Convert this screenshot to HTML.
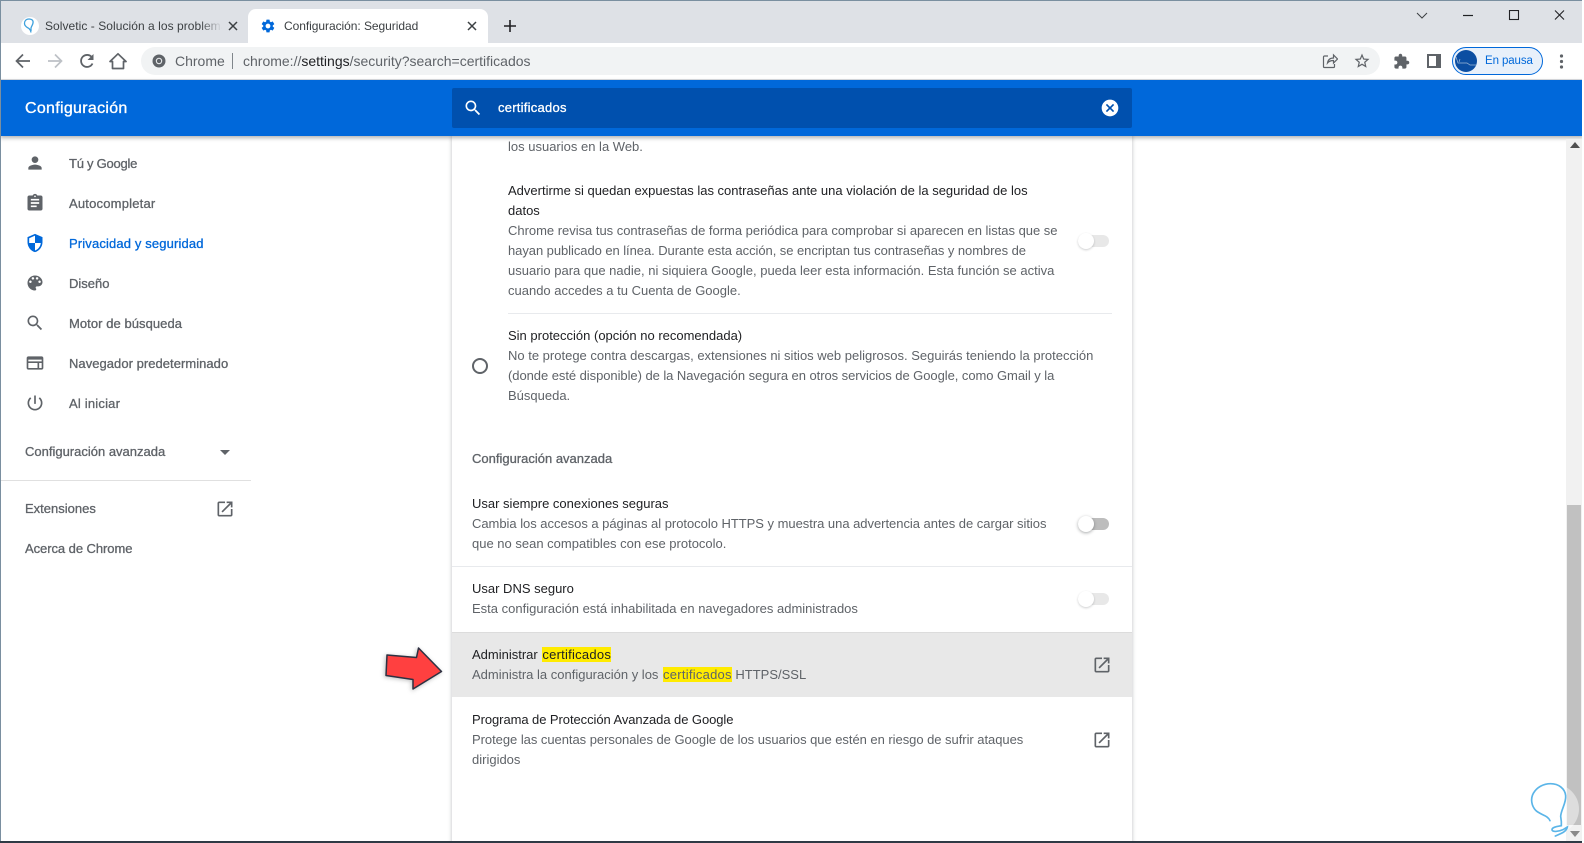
<!DOCTYPE html>
<html lang="es"><head><meta charset="utf-8"><title>Configuración: Seguridad</title>
<style>
html,body{margin:0;padding:0;width:1584px;height:843px;overflow:hidden;background:#fff}
body{position:relative;font-family:"Liberation Sans",sans-serif;color:#202124}
div,svg,span.a{position:absolute}
.t{white-space:nowrap;font-size:13px;line-height:20px;height:20px}
.k{color:#202124}.g{color:#5f6368}
.m{color:#5f6368;-webkit-text-stroke:.3px #5f6368}
mark{background:#ffeb00;color:inherit;letter-spacing:.25px}
svg{display:block}
</style></head><body>
<!-- tab strip -->
<div style="left:0;top:0;width:1584px;height:43px;background:#dee1e6"></div>
<div style="left:0;top:0;width:1584px;height:1px;background:#7a8fa0"></div>
<div style="left:248px;top:9px;width:240px;height:34px;background:#fff;border-radius:8px 8px 0 0"></div>
<svg style="left:20px;top:16px" width="20" height="20" viewBox="0 0 20 20"><circle cx="10" cy="10" r="9" fill="#fff"/><path d="M9 3c-3 0-4.500 2-4.500 4.500 0 3 3 4 4.500 5l1.500 2 .5 2M9 3c3 0 4.500 1.500 4 4-.3 2-1.500 3-2 5v3" fill="none" stroke="#3fa1dd" stroke-width="1.300"/></svg>
<div class="t" style="left:45px;top:16px;font-size:12px;color:#3c4043;width:177px;overflow:hidden;letter-spacing:.05px">Solvetic - Solución a los problemas</div>
<div style="left:200px;top:16px;width:22px;height:20px;background:linear-gradient(90deg,rgba(222,225,230,0),#dee1e6)"></div>
<svg style="left:227px;top:20px" width="12" height="12" viewBox="0 0 12 12"><path d="M2 2l8 8M10 2l-8 8" stroke="#3c4043" stroke-width="1.500"/></svg>
<svg style="left:260px;top:18px" width="16" height="16" viewBox="0 0 24 24"><path fill="#0068da" d="M19.140 12.940c.04-.3.06-.61.06-.94 0-.32-.02-.64-.07-.94l2.030-1.580c.18-.14.23-.41.12-.61l-1.920-3.320c-.12-.22-.37-.29-.59-.22l-2.390.96c-.5-.38-1.030-.7-1.620-.94l-.36-2.540c-.04-.24-.24-.41-.48-.41h-3.840c-.24 0-.43.17-.47.41l-.36 2.540c-.59.24-1.130.57-1.620.94l-2.390-.96c-.22-.08-.47 0-.59.22L2.740 8.870c-.12.21-.08.47.12.61l2.030 1.580c-.05.3-.09.63-.09.94s.02.64.07.94l-2.030 1.580c-.18.14-.23.41-.12.61l1.920 3.320c.12.22.37.29.59.22l2.390-.96c.5.38 1.030.7 1.620.94l.36 2.540c.05.24.24.41.48.41h3.840c.24 0 .44-.17.47-.41l.36-2.540c.59-.24 1.130-.56 1.620-.94l2.390.96c.22.08.47 0 .59-.22l1.920-3.320c.12-.22.07-.47-.12-.61l-2.010-1.580zM12 15.600c-1.980 0-3.600-1.620-3.600-3.600s1.620-3.600 3.600-3.600 3.600 1.620 3.600 3.600-1.620 3.600-3.600 3.600z"/></svg>
<div class="t" style="left:284px;top:16px;font-size:12px;color:#3c4043;letter-spacing:-.05px">Configuración: Seguridad</div>
<svg style="left:466px;top:20px" width="12" height="12" viewBox="0 0 12 12"><path d="M2 2l8 8M10 2l-8 8" stroke="#3c4043" stroke-width="1.500"/></svg>
<svg style="left:504px;top:20px" width="12" height="12" viewBox="0 0 12 12"><path d="M6 0v12M0 6h12" stroke="#202124" stroke-width="1.600"/></svg>
<!-- window controls -->
<svg style="left:1415px;top:10px" width="160" height="12" viewBox="0 0 160 12"><path d="M2 3l5 5 5-5" fill="none" stroke="#3c4043"/><path d="M48 5.500h10" stroke="#202124" stroke-width="1.200"/><rect x="94.500" y=".5" width="9" height="9" fill="none" stroke="#202124" stroke-width="1.100"/><path d="M140 .5l9 9M149 .5l-9 9" stroke="#202124" stroke-width="1.100"/></svg>
<!-- toolbar -->
<div style="left:0;top:43px;width:1584px;height:37px;background:#fff"></div>
<div style="left:0;top:79px;width:1584px;height:1px;background:#dadce0"></div>
<svg style="left:15px;top:53px" width="16" height="16" viewBox="0 0 16 16"><path d="M15 8H2M8 1.500L1.500 8 8 14.500" fill="none" stroke="#5f6368" stroke-width="1.700"/></svg>
<svg style="left:47px;top:53px" width="16" height="16" viewBox="0 0 16 16"><path d="M1 8h13M8 1.500L14.500 8 8 14.500" fill="none" stroke="#bdc1c6" stroke-width="1.700"/></svg>
<svg style="left:79px;top:53px" width="16" height="16" viewBox="0 0 16 16"><path d="M13.500 10.500A6 6 0 1 1 13 4.500" fill="none" stroke="#5f6368" stroke-width="1.800"/><path d="M14.500 1v6h-6z" fill="#5f6368"/></svg>
<svg style="left:109px;top:52px" width="18" height="18" viewBox="0 0 18 18"><path d="M1 9.500L9 1.800l8 7.700h-2.500V16.500h-11V9.500z" fill="none" stroke="#5f6368" stroke-width="1.700" stroke-linejoin="round"/></svg>
<div style="left:141px;top:47px;width:1239px;height:28px;border-radius:14px;background:#f1f3f4"></div>
<svg style="left:152px;top:54px" width="14" height="14" viewBox="0 0 14 14"><circle cx="7" cy="7" r="6.500" fill="#5f6368"/><circle cx="7" cy="7" r="3.200" fill="#f1f3f4"/><circle cx="7" cy="7" r="2.200" fill="#5f6368"/></svg>
<div class="t" style="left:175px;top:51px;font-size:14px;color:#5f6368">Chrome</div>
<div style="left:232px;top:53px;width:1px;height:16px;background:#80868b"></div>
<div class="t" style="left:243px;top:51px;font-size:14px;color:#5f6368">chrome://<span style="color:#202124">settings</span>/security?search=certificados</div>
<svg style="left:1322px;top:53px" width="16" height="16" viewBox="0 0 16 16"><path d="M6 3H2.500A1 1 0 0 0 1.500 4v9.500a1 1 0 0 0 1 1h9a1 1 0 0 0 1-1V11M5.500 10c.5-3 2.500-5 6-5V2l4 4-4 4V7.500c-2.500 0-4.500.7-6 2.500z" fill="none" stroke="#5f6368" stroke-width="1.200"/></svg>
<svg style="left:1353px;top:52px" width="18" height="18" viewBox="0 0 24 24"><path fill="#5f6368" d="M22 9.240l-7.190-.62L12 2 9.190 8.630 2 9.240l5.460 4.730L5.820 21 12 17.270 18.180 21l-1.630-7.030L22 9.240zM12 15.400l-3.760 2.270 1-4.280-3.320-2.880 4.380-.38L12 6.100l1.710 4.040 4.380.38-3.320 2.880 1 4.280L12 15.400z"/></svg>
<svg style="left:1393px;top:53px" width="17" height="17" viewBox="0 0 24 24"><path fill="#5f6368" d="M20.500 11H19V7c0-1.100-.9-2-2-2h-4V3.500C13 2.120 11.880 1 10.500 1S8 2.120 8 3.500V5H4c-1.100 0-1.990.9-1.990 2v3.800H3.500c1.490 0 2.700 1.210 2.700 2.700s-1.210 2.700-2.700 2.700H2V20c0 1.100.9 2 2 2h3.800v-1.500c0-1.490 1.210-2.700 2.700-2.700 1.490 0 2.700 1.210 2.700 2.700V22H17c1.100 0 2-.9 2-2v-4h1.500c1.380 0 2.500-1.120 2.500-2.500S21.880 11 20.500 11z"/></svg>
<svg style="left:1427px;top:54px" width="14" height="14" viewBox="0 0 14 14"><rect x="0" y="0" width="14" height="14" fill="#5f6368"/><rect x="2" y="2" width="7" height="10" fill="#fff"/></svg>
<div style="left:1452px;top:47px;width:89px;height:26px;border:1px solid #0068da;border-radius:14px;background:#e8f0fa"></div>
<div style="left:1455px;top:50px;width:22px;height:22px;border-radius:50%;background:#0b4ea2"></div>
<svg style="left:1455px;top:50px" width="22" height="22" viewBox="0 0 22 22"><path d="M1 7l2 6h9l3 2h6M4 12l1-3" fill="none" stroke="#9fb8d6" stroke-width=".7"/></svg>
<div class="t" style="left:1485px;top:51px;font-size:11.500px;color:#0068da;letter-spacing:-.1px">En pausa</div>
<svg style="left:1559px;top:54px" width="5" height="15" viewBox="0 0 5 15"><circle cx="2.500" cy="2" r="1.600" fill="#5f6368"/><circle cx="2.500" cy="7.500" r="1.600" fill="#5f6368"/><circle cx="2.500" cy="13" r="1.600" fill="#5f6368"/></svg>
<!-- card -->
<div style="left:452px;top:136px;width:680px;height:707px;background:#fff;box-shadow:0 0 3px 1px rgba(60,64,67,.22)"></div>
<!-- blue header -->
<div style="left:0;top:80px;width:1584px;height:56px;background:#0068da;box-shadow:0 2px 4px rgba(60,64,67,.4)"></div>
<div class="t" style="left:25px;top:99px;font-size:16px;letter-spacing:.3px;color:#fff;-webkit-text-stroke:.35px #fff">Configuración</div>
<div style="left:452px;top:88px;width:680px;height:40px;background:#0050ae;border-radius:2px"></div>
<svg style="left:463px;top:98px" width="20" height="20" viewBox="0 0 24 24"><path fill="#fff" d="M15.500 14h-.79l-.28-.27C15.410 12.590 16 11.110 16 9.500 16 5.910 13.090 3 9.500 3S3 5.910 3 9.500 5.910 16 9.500 16c1.610 0 3.090-.59 4.230-1.570l.27.28v.79l5 4.990L20.490 19l-4.990-5zm-6 0C7.010 14 5 11.990 5 9.500S7.010 5 9.500 5 14 7.010 14 9.500 11.990 14 9.500 14z"/></svg>
<div class="t" style="left:498px;top:98px;color:#fff;letter-spacing:.25px;-webkit-text-stroke:.3px #fff">certificados</div>
<svg style="left:1100px;top:98px" width="20" height="20" viewBox="0 0 24 24"><path fill="#fff" d="M12 2C6.470 2 2 6.470 2 12s4.470 10 10 10 10-4.470 10-10S17.530 2 12 2zm5 13.590L15.590 17 12 13.410 8.410 17 7 15.590 10.590 12 7 8.410 8.410 7 12 10.590 15.590 7 17 8.410 13.410 12 17 15.590z"/></svg>
<!-- sidebar -->
<svg style="left:25px;top:153px" width="20" height="20" viewBox="0 0 24 24"><path fill="#5f6368" d="M12 12c2.210 0 4-1.790 4-4s-1.790-4-4-4-4 1.790-4 4 1.790 4 4 4zm0 2c-2.670 0-8 1.340-8 4v2h16v-2c0-2.660-5.330-4-8-4z"/></svg>
<svg style="left:25px;top:193px" width="20" height="20" viewBox="0 0 24 24"><path fill="#5f6368" d="M19 3h-4.180C14.400 1.840 13.300 1 12 1c-1.300 0-2.400.84-2.820 2H5c-1.100 0-2 .9-2 2v14c0 1.100.9 2 2 2h14c1.100 0 2-.9 2-2V5c0-1.100-.9-2-2-2zm-7 0c.55 0 1 .45 1 1s-.45 1-1 1-1-.45-1-1 .45-1 1-1zm2 14H7v-2h7v2zm3-4H7v-2h10v2zm0-4H7V7h10v2z"/></svg>
<svg style="left:25px;top:233px" width="20" height="20" viewBox="0 0 24 24"><path fill="#0068da" d="M12 1L3 5v6c0 5.550 3.840 10.740 9 12 5.160-1.260 9-6.450 9-12V5l-9-4zm0 10.990h7c-.53 4.120-3.280 7.790-7 8.940V12H5V6.300l7-3.110v8.800z"/></svg>
<svg style="left:25px;top:273px" width="20" height="20" viewBox="0 0 24 24"><path fill="#5f6368" d="M12 3c-4.970 0-9 4.030-9 9s4.030 9 9 9c.83 0 1.500-.67 1.500-1.500 0-.39-.15-.74-.39-1.010-.23-.26-.38-.61-.38-.99 0-.83.67-1.500 1.500-1.500H16c2.760 0 5-2.240 5-5 0-4.420-4.030-8-9-8zm-5.500 9c-.83 0-1.500-.67-1.500-1.500S5.670 9 6.500 9 8 9.670 8 10.500 7.330 12 6.500 12zm3-4C8.670 8 8 7.330 8 6.500S8.670 5 9.500 5s1.500.67 1.500 1.500S10.330 8 9.500 8zm5 0c-.83 0-1.500-.67-1.500-1.500S13.670 5 14.500 5s1.500.67 1.500 1.500S15.330 8 14.500 8zm3 4c-.83 0-1.500-.67-1.500-1.500S16.670 9 17.500 9s1.500.67 1.500 1.500-.67 1.500-1.500 1.500z"/></svg>
<svg style="left:25px;top:313px" width="20" height="20" viewBox="0 0 24 24"><path fill="#5f6368" d="M15.500 14h-.79l-.28-.27C15.410 12.590 16 11.110 16 9.500 16 5.910 13.090 3 9.500 3S3 5.910 3 9.500 5.910 16 9.500 16c1.610 0 3.090-.59 4.230-1.570l.27.28v.79l5 4.990L20.490 19l-4.990-5zm-6 0C7.010 14 5 11.990 5 9.500S7.010 5 9.500 5 14 7.010 14 9.500 11.990 14 9.500 14z"/></svg>
<svg style="left:25px;top:353px" width="20" height="20" viewBox="0 0 24 24"><path fill="#5f6368" d="M20 4H4c-1.100 0-2 .9-2 2v12c0 1.100.9 2 2 2h16c1.100 0 2-.9 2-2V6c0-1.100-.9-2-2-2zM4 18v-6h11v6H4zm16 0h-3v-6h3v6zM4 10V8h16v2H4z"/></svg>
<svg style="left:25px;top:393px" width="20" height="20" viewBox="0 0 24 24"><path fill="#5f6368" d="M13 3h-2v10h2V3zm4.830 2.170l-1.420 1.420C17.990 7.860 19 9.810 19 12c0 3.870-3.130 7-7 7s-7-3.130-7-7c0-2.190 1.010-4.140 2.580-5.420L6.170 5.170C4.230 6.820 3 9.260 3 12c0 4.970 4.030 9 9 9s9-4.030 9-9c0-2.740-1.230-5.180-3.170-6.830z"/></svg>
<div class="t m" style="left:69px;top:154px;letter-spacing:-.25px">Tú y Google</div>
<div class="t m" style="left:69px;top:194px;letter-spacing:.2px">Autocompletar</div>
<div class="t m" style="left:69px;top:234px;letter-spacing:.14px;color:#0068da;-webkit-text-stroke-color:#0068da">Privacidad y seguridad</div>
<div class="t m" style="left:69px;top:274px">Diseño</div>
<div class="t m" style="left:69px;top:314px;letter-spacing:.06px">Motor de búsqueda</div>
<div class="t m" style="left:69px;top:354px;letter-spacing:.04px">Navegador predeterminado</div>
<div class="t m" style="left:69px;top:394px;letter-spacing:.2px">Al iniciar</div>
<div class="t m" style="left:25px;top:442px">Configuración avanzada</div>
<svg style="left:220px;top:450px" width="10" height="5" viewBox="0 0 10 5"><path d="M0 0h10L5 5z" fill="#5f6368"/></svg>
<div style="left:1px;top:480px;width:250px;height:1px;background:#e0e0e0"></div>
<div class="t m" style="left:25px;top:499px">Extensiones</div>
<svg style="left:215px;top:499px" width="20" height="20" viewBox="0 0 24 24"><path fill="#5f6368" d="M19 19H5V5h7V3H5c-1.110 0-2 .9-2 2v14c0 1.100.89 2 2 2h14c1.100 0 2-.9 2-2v-7h-2v7zM14 3v2h3.590l-9.830 9.830 1.410 1.410L19 6.410V10h2V3h-7z"/></svg>
<div class="t m" style="left:25px;top:539px;letter-spacing:-.06px">Acerca de Chrome</div>
<!-- card content -->
<div class="t g" style="left:508px;top:137px">los usuarios en la Web.</div>
<div class="t k" style="left:508px;top:181px">Advertirme si quedan expuestas las contraseñas ante una violación de la seguridad de los</div>
<div class="t k" style="left:508px;top:201px">datos</div>
<div class="t g" style="left:508px;top:221px;letter-spacing:-.02px">Chrome revisa tus contraseñas de forma periódica para comprobar si aparecen en listas que se</div>
<div class="t g" style="left:508px;top:241px;letter-spacing:-.06px">hayan publicado en línea. Durante esta acción, se encriptan tus contraseñas y nombres de</div>
<div class="t g" style="left:508px;top:261px">usuario para que nadie, ni siquiera Google, pueda leer esta información. Esta función se activa</div>
<div class="t g" style="left:508px;top:281px">cuando accedes a tu Cuenta de Google.</div>
<div style="left:1078px;top:235px;width:31px;height:12px;border-radius:6px;background:#e8e8e8"></div>
<div style="left:1078px;top:233px;width:16px;height:16px;border-radius:50%;background:#fff;box-shadow:0 1px 2px rgba(60,64,67,.25)"></div>
<div style="left:508px;top:313px;width:604px;height:1px;background:#e8eaed"></div>
<div class="t k" style="left:508px;top:326px">Sin protección (opción no recomendada)</div>
<div class="t g" style="left:508px;top:346px">No te protege contra descargas, extensiones ni sitios web peligrosos. Seguirás teniendo la protección</div>
<div class="t g" style="left:508px;top:366px;letter-spacing:-.055px">(donde esté disponible) de la Navegación segura en otros servicios de Google, como Gmail y la</div>
<div class="t g" style="left:508px;top:386px">Búsqueda.</div>
<div style="left:472px;top:358px;width:12px;height:12px;border:2px solid #5f6368;border-radius:50%"></div>
<div class="t m" style="left:472px;top:449px">Configuración avanzada</div>
<div class="t k" style="left:472px;top:494px">Usar siempre conexiones seguras</div>
<div class="t g" style="left:472px;top:514px;letter-spacing:-.03px">Cambia los accesos a páginas al protocolo HTTPS y muestra una advertencia antes de cargar sitios</div>
<div class="t g" style="left:472px;top:534px">que no sean compatibles con ese protocolo.</div>
<div style="left:1078px;top:518px;width:31px;height:12px;border-radius:6px;background:#bdbdbd"></div>
<div style="left:1078px;top:516px;width:16px;height:16px;border-radius:50%;background:#fff;box-shadow:0 1px 3px rgba(60,64,67,.45)"></div>
<div style="left:452px;top:566px;width:680px;height:1px;background:#e8eaed"></div>
<div class="t k" style="left:472px;top:579px">Usar DNS seguro</div>
<div class="t g" style="left:472px;top:599px">Esta configuración está inhabilitada en navegadores administrados</div>
<div style="left:1078px;top:593px;width:31px;height:12px;border-radius:6px;background:#e8e8e8"></div>
<div style="left:1078px;top:591px;width:16px;height:16px;border-radius:50%;background:#fff;box-shadow:0 1px 2px rgba(60,64,67,.25)"></div>
<div style="left:452px;top:632px;width:680px;height:65px;background:#e8e8e8;border-top:1px solid #dcdcdc;box-sizing:border-box"></div>
<div class="t k" style="left:472px;top:645px">Administrar <mark style="margin-left:1px">certificados</mark></div>
<div class="t g" style="left:472px;top:665px">Administra la configuración y los <mark style="margin-left:1px">certificados</mark> HTTPS/SSL</div>
<svg style="left:1092px;top:655px" width="20" height="20" viewBox="0 0 24 24"><path fill="#5f6368" d="M19 19H5V5h7V3H5c-1.110 0-2 .9-2 2v14c0 1.100.89 2 2 2h14c1.100 0 2-.9 2-2v-7h-2v7zM14 3v2h3.590l-9.830 9.830 1.410 1.410L19 6.410V10h2V3h-7z"/></svg>
<div class="t k" style="left:472px;top:710px;letter-spacing:-.07px">Programa de Protección Avanzada de Google</div>
<div class="t g" style="left:472px;top:730px;letter-spacing:-.04px">Protege las cuentas personales de Google de los usuarios que estén en riesgo de sufrir ataques</div>
<div class="t g" style="left:472px;top:750px">dirigidos</div>
<svg style="left:1092px;top:730px" width="20" height="20" viewBox="0 0 24 24"><path fill="#5f6368" d="M19 19H5V5h7V3H5c-1.110 0-2 .9-2 2v14c0 1.100.89 2 2 2h14c1.100 0 2-.9 2-2v-7h-2v7zM14 3v2h3.590l-9.830 9.830 1.410 1.410L19 6.410V10h2V3h-7z"/></svg>
<!-- arrow -->
<svg style="left:380px;top:640px;filter:drop-shadow(-1px 1px 2px rgba(0,0,0,.25))" width="80" height="62" viewBox="380 640 80 62"><path d="M387 655l29.500 2.500 2-9.500 23 23.500-28.500 17.500 0-9.500-27-4z" fill="#ff4040" stroke="#2d3142" stroke-width="1.500" stroke-linejoin="round"/></svg>
<!-- scrollbar -->
<div style="left:1566px;top:139px;width:16px;height:702px;background:#f1f1f1"></div>
<div style="left:1567px;top:505px;width:14px;height:320px;background:#c1c1c1"></div>
<svg style="left:1570px;top:142px" width="10" height="6" viewBox="0 0 10 6"><path d="M0 6h10L5 0z" fill="#505050"/></svg>
<svg style="left:1570px;top:831px" width="10" height="6" viewBox="0 0 10 6"><path d="M0 0h10L5 6z" fill="#8a8a8a"/></svg>
<!-- watermark -->
<div style="left:1529px;top:784px;width:50px;height:50px;border-radius:50%;background:rgba(255,255,255,.45)"></div>
<svg style="left:1440px;top:730px" width="144" height="113" viewBox="0 0 432 339"><path d="M330 272c-6-16-28-17-42-30-14-14-17-36-8-52 10-18 30-29 52-29 24 0 43 15 45 36 2 22-14 42-15 62l2 16 0 12c-10 2-28 4-28 12 0 8 20 6 33 0l13-8c-2 14-20 20-36 27" fill="none" stroke="#5bb5e8" stroke-width="5" stroke-linecap="round"/></svg>
<!-- window edges -->
<div style="left:0;top:0;width:1px;height:843px;background:#7a8fa0"></div>
<div style="left:0;top:841px;width:1584px;height:2px;background:#2f3a45"></div>
<div style="left:1582px;top:0;width:2px;height:843px;background:#fff"></div>
</body></html>
